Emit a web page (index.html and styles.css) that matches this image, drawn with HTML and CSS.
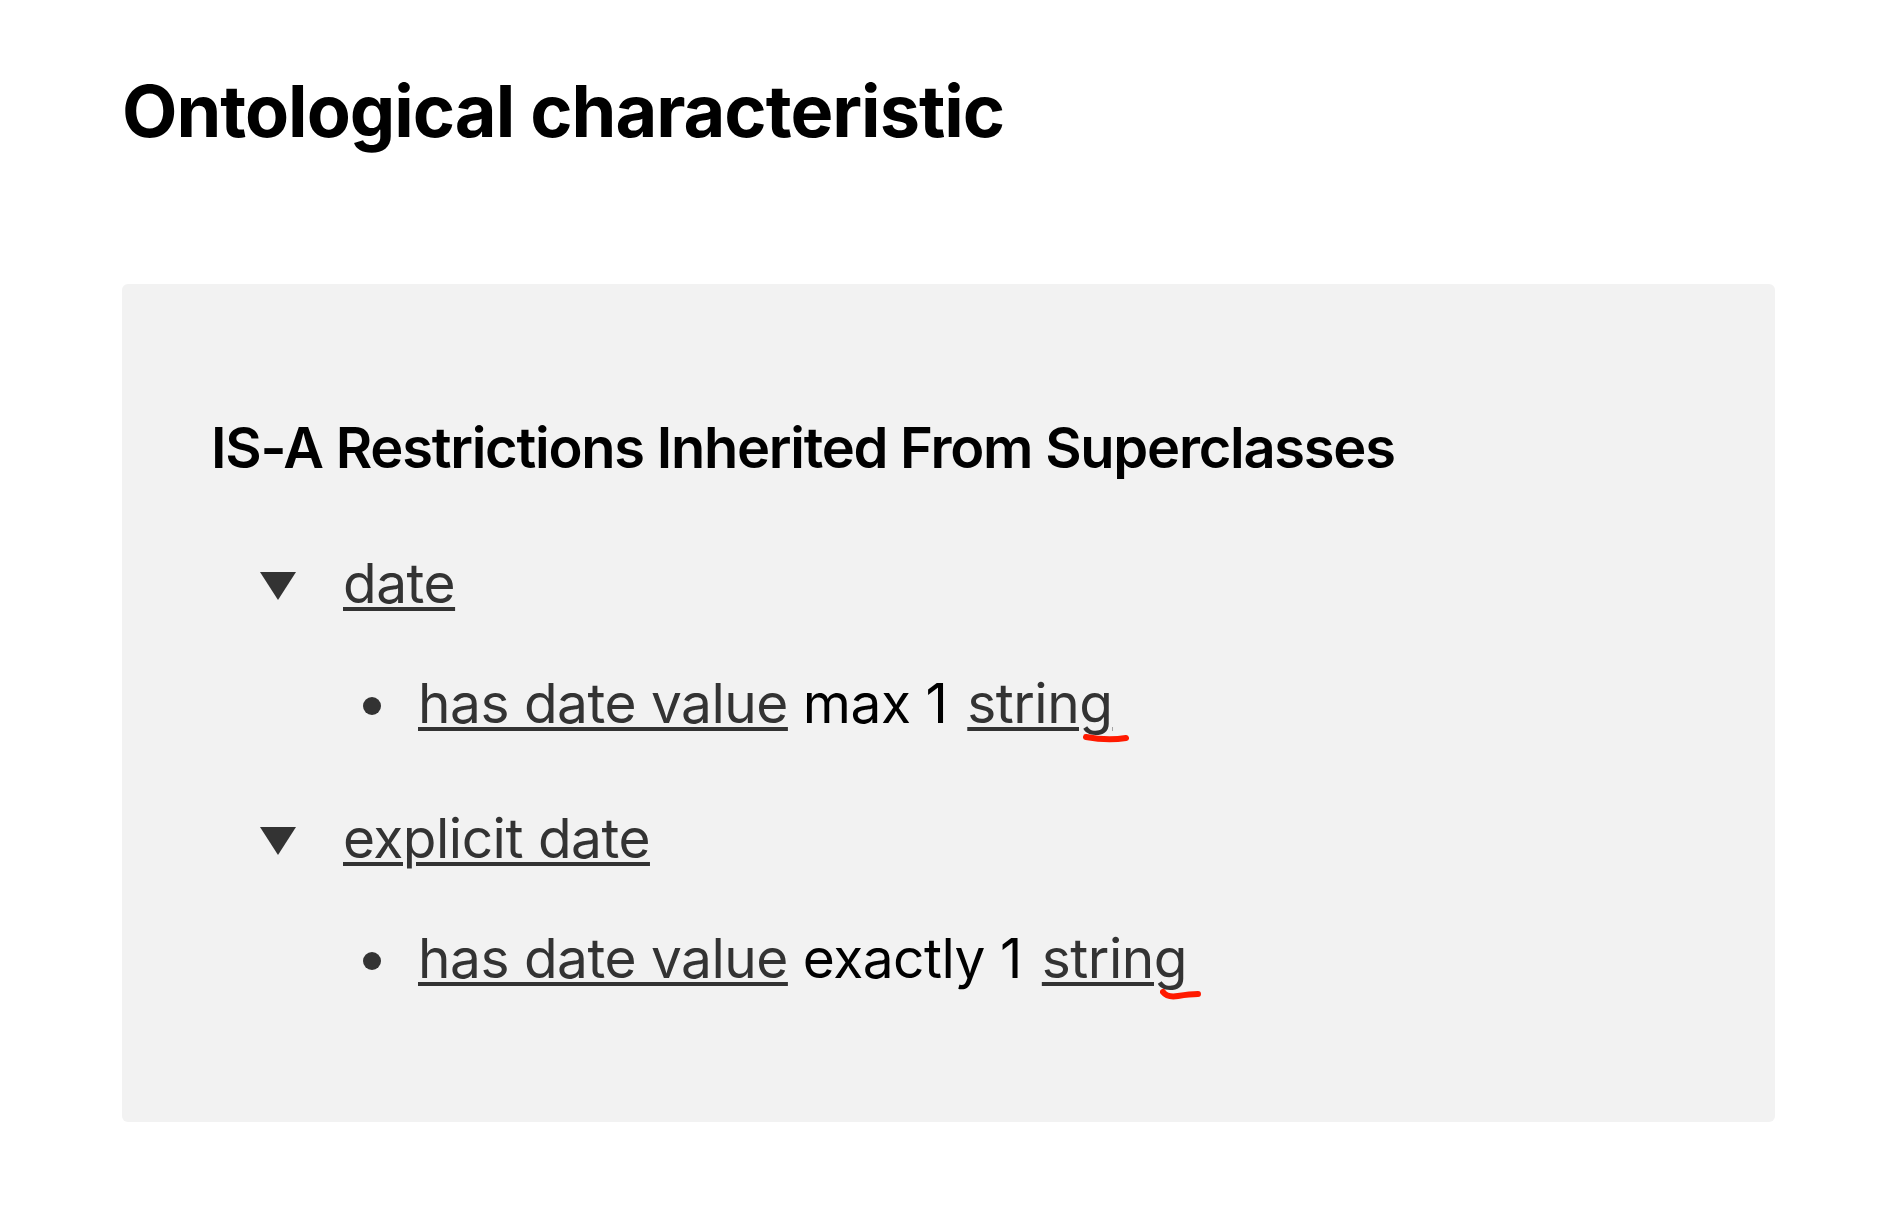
FILE: index.html
```html
<!DOCTYPE html>
<html lang="en">
<head>
<meta charset="utf-8">
<title>Ontological characteristic</title>
<link rel="stylesheet" href="styles.css">
</head>
<body>
<div class="page">
  <h1 class="title">Ontological characteristic</h1>
  <section class="panel">
    <h2 class="panel-title">IS-A Restrictions Inherited From Superclasses</h2>
    <div class="tree">
      <div class="group">
        <div class="summary">
          <svg class="caret" width="36" height="28" viewBox="0 0 36 28"><path d="M0 0H36L18 28Z" fill="#333"/></svg>
          <a class="link" href="#">date</a>
        </div>
        <div class="item">
          <span class="dot"></span>
          <span class="line"><a class="link" href="#">has date value</a> max 1 <span class="mark"><a class="link" href="#">string</a><svg class="squiggle s1" width="46" height="12" viewBox="0 0 46 12"><path d="M3 5C14 7 30 8 43 6" stroke="#ff1a00" stroke-width="6" stroke-linecap="round" fill="none"/></svg></span></span>
        </div>
      </div>
      <div class="group">
        <div class="summary">
          <svg class="caret" width="36" height="28" viewBox="0 0 36 28"><path d="M0 0H36L18 28Z" fill="#333"/></svg>
          <a class="link" href="#">explicit date</a>
        </div>
        <div class="item">
          <span class="dot"></span>
          <span class="line"><a class="link" href="#">has date value</a> exactly 1 <span class="mark"><a class="link" href="#">string</a><svg class="squiggle s2" width="42" height="14" viewBox="0 0 42 14"><path d="M3 5C6 9 12 10 18 9C24 8 32 7 38 7" stroke="#ff1a00" stroke-width="6" stroke-linecap="round" fill="none"/></svg></span></span>
        </div>
      </div>
    </div>
  </section>
</div>
</body>
</html>
```

FILE: styles.css
```css
html, body {
  margin: 0;
  padding: 0;
  background: #ffffff;
}

body {
  font-family: "Inter", "Noto Sans", "Liberation Sans", sans-serif;
  color: #000;
}

.page {
  padding: 67px 121px 0 122px;
}

.title {
  margin: 0;
  font-size: 72px;
  line-height: 88px;
  font-weight: 700;
  letter-spacing: -1px;
}

.panel {
  margin-top: 129px;
  background: #f2f2f2;
  border-radius: 6px;
  padding: 130px 89px 124px 89px;
}

.panel-title {
  margin: 0;
  font-size: 56px;
  line-height: 68px;
  font-weight: 600;
  letter-spacing: -1.25px;
}

.tree {
  margin-top: 61px;
  padding-left: 49px;
  display: flex;
  flex-direction: column;
  gap: 55px;
  font-size: 55px;
  line-height: 80px;
  letter-spacing: -0.5px;
}

.group {
  display: flex;
  flex-direction: column;
  gap: 40px;
}

.summary {
  display: flex;
  align-items: flex-start;
  gap: 47px;
}

.caret {
  margin-top: 29px;
  flex: none;
}

.item {
  display: flex;
  align-items: flex-start;
  padding-left: 103px;
  gap: 37px;
}

.dot {
  flex: none;
  width: 18px;
  height: 18px;
  margin-top: 34px;
  border-radius: 50%;
  background: #333;
}

.link {
  color: #333333;
  text-decoration: underline;
  text-decoration-thickness: 4px;
  text-underline-offset: 4px;
}

.mark {
  position: relative;
  margin-left: 5px;
}

.squiggle {
  position: absolute;
  pointer-events: none;
}

.s1 {
  right: -17px;
  bottom: -8px;
}

.s2 {
  right: -15px;
  bottom: -10px;
}
```
